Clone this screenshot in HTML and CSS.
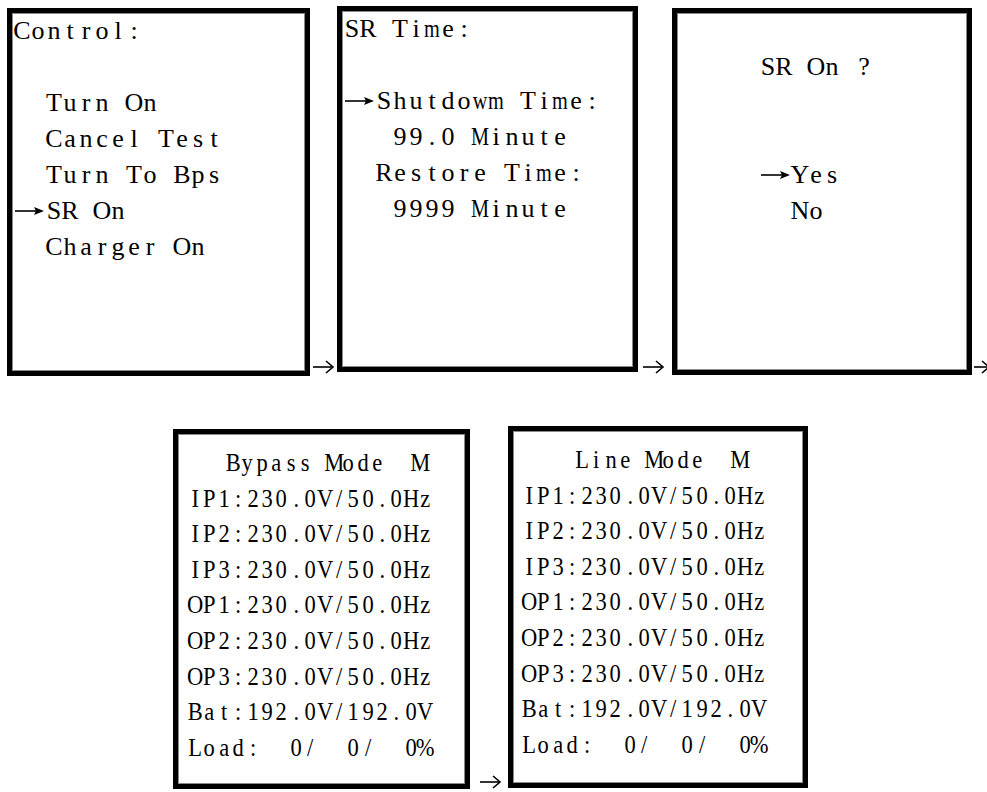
FILE: index.html
```html
<!DOCTYPE html>
<html lang="en">
<head>
    <meta charset="UTF-8">
    <meta name="viewport" content="width=device-width, initial-scale=1.0">
    <title>UPS LCD menu</title>
    <link rel="stylesheet" href="styles.css">
</head>
<body>
    <div class="row row-top">
        <div class="screen s1">
            <div class="ln">Control:</div>
            <div class="ln"> </div>
            <div class="ln">  Turn On</div>
            <div class="ln">  Cancel Test</div>
            <div class="ln">  Turn To Bps</div>
            <div class="ln"><span class="ptr"><svg width="30" height="12" viewBox="0 0 30 12"><line x1="1" y1="6" x2="23" y2="6" stroke="#000" stroke-width="1.6"/><polygon points="20,2 30,6 20,10 22,6" fill="#000"/></svg></span>SR On</div>
            <div class="ln">  Charger On</div>
        </div>
        <div class="step"><svg width="22" height="14" viewBox="0 0 22 14"><line x1="0" y1="7" x2="20" y2="7" stroke="#000" stroke-width="1.6"/><polyline points="13,1 20,7 13,13" fill="none" stroke="#000" stroke-width="1.6"/></svg></div>
        <div class="screen s2">
            <div class="ln">SR Time:</div>
            <div class="ln"> </div>
            <div class="ln"><span class="ptr"><svg width="30" height="12" viewBox="0 0 30 12"><line x1="1" y1="6" x2="23" y2="6" stroke="#000" stroke-width="1.6"/><polygon points="20,2 30,6 20,10 22,6" fill="#000"/></svg></span>Shutdowm Time:</div>
            <div class="ln">   99.0 Minute</div>
            <div class="ln">  Restore Time:</div>
            <div class="ln">   9999 Minute</div>
        </div>
        <div class="step step-wide"><svg width="22" height="14" viewBox="0 0 22 14"><line x1="0" y1="7" x2="20" y2="7" stroke="#000" stroke-width="1.6"/><polyline points="13,1 20,7 13,13" fill="none" stroke="#000" stroke-width="1.6"/></svg></div>
        <div class="screen s3">
            <div class="ln"> </div>
            <div class="ln">     SR On ?</div>
            <div class="ln"> </div>
            <div class="ln"> </div>
            <div class="ln">     <span class="ptr"><svg width="30" height="12" viewBox="0 0 30 12"><line x1="1" y1="6" x2="23" y2="6" stroke="#000" stroke-width="1.6"/><polygon points="20,2 30,6 20,10 22,6" fill="#000"/></svg></span>Yes</div>
            <div class="ln">       No</div>
        </div>
        <div class="step step-last"><svg width="16" height="14" viewBox="0 0 16 14"><line x1="0" y1="7" x2="15" y2="7" stroke="#000" stroke-width="1.6"/><polyline points="8,1 15,7 8,13" fill="none" stroke="#000" stroke-width="1.6"/></svg></div>
    </div>

    <div class="row row-bottom">
        <div class="screen status s4">
            <div class="ln t-bypass">Bypass Mode  M</div>
            <div class="ln">IP1:230.0V/50.0Hz</div>
            <div class="ln">IP2:230.0V/50.0Hz</div>
            <div class="ln">IP3:230.0V/50.0Hz</div>
            <div class="ln">OP1:230.0V/50.0Hz</div>
            <div class="ln">OP2:230.0V/50.0Hz</div>
            <div class="ln">OP3:230.0V/50.0Hz</div>
            <div class="ln">Bat:192.0V/192.0V</div>
            <div class="ln">Load:  0/  0/  0%</div>
        </div>
        <div class="step step-mid"><svg width="22" height="14" viewBox="0 0 22 14"><line x1="0" y1="7" x2="20" y2="7" stroke="#000" stroke-width="1.6"/><polyline points="13,1 20,7 13,13" fill="none" stroke="#000" stroke-width="1.6"/></svg></div>
        <div class="screen status s5">
            <div class="ln t-line">Line Mode  M</div>
            <div class="ln">IP1:230.0V/50.0Hz</div>
            <div class="ln">IP2:230.0V/50.0Hz</div>
            <div class="ln">IP3:230.0V/50.0Hz</div>
            <div class="ln">OP1:230.0V/50.0Hz</div>
            <div class="ln">OP2:230.0V/50.0Hz</div>
            <div class="ln">OP3:230.0V/50.0Hz</div>
            <div class="ln">Bat:192.0V/192.0V</div>
            <div class="ln">Load:  0/  0/  0%</div>
        </div>
    </div>
    <script>
        // LCD uses a fixed character grid: put every character in its own cell
        document.querySelectorAll('.ln').forEach(function(line) {
            Array.from(line.childNodes).forEach(function(node) {
                if (node.nodeType !== 3) return;
                const frag = document.createDocumentFragment();
                for (const ch of node.textContent) {
                    const cell = document.createElement('span');
                    cell.className = 'mwMW'.indexOf(ch) >= 0 ? 'c wide' : 'c';
                    cell.textContent = ch;
                    frag.appendChild(cell);
                }
                line.replaceChild(frag, node);
            });
        });
    </script>
</body>
</html>
```

FILE: styles.css
```css
body {
    margin: 0;
    padding: 0;
    background-color: #fff;
    color: #000;
    font-family: "Liberation Serif", "DejaVu Serif", serif;
    overflow: hidden;
}
.row {
    display: flex;
    align-items: flex-start;
}
.row-top {
    height: 376px;
    padding-left: 7px;
}
.row-bottom {
    padding-left: 173px;
}
.screen {
    box-sizing: border-box;
    border: 5px solid #000;
    box-shadow: inset 0 0 0 1px #8a8a8a;
    background: #fff;
    padding: 0 0 0 2px;
    font-size: 26px;
    line-height: 36px;
    flex: none;
}
.ln {
    white-space: pre;
    height: 36px;
}
.c {
    display: inline-flex;
    justify-content: center;
    width: 16px;
}
.c.wide {
    transform: scaleX(0.78);
}
.ptr {
    display: inline-block;
    width: 32px;
    vertical-align: middle;
    line-height: 0;
}
.ptr svg {
    display: block;
    margin-top: -4px;
}
.s1 {
    width: 303px;
    height: 368px;
    margin-top: 8px;
}
.s2 {
    width: 301px;
    height: 366px;
    margin-top: 6px;
}
.s3 {
    width: 300px;
    height: 367px;
    margin-top: 8px;
    padding-left: 3px;
}
.step {
    flex: none;
    align-self: stretch;
    display: flex;
    align-items: flex-end;
    width: 27px;
    padding-bottom: 2px;
    box-sizing: border-box;
    padding-left: 3px;
}
.step svg {
    flex: none;
}
.step-wide {
    width: 34px;
    padding-left: 5px;
}
.step-last {
    flex: 1;
    overflow: hidden;
    padding-left: 2px;
}
.step-mid {
    width: 38px;
    padding-left: 10px;
    padding-bottom: 0;
}
.status {
    font-size: 25px;
    line-height: 35.6px;
    padding: 11px 0 0 10px;
}
.status .ln {
    height: 35.6px;
}
.status .c {
    width: 14.4px;
    transform: scaleX(0.9);
}
.s4 {
    width: 297px;
    height: 360px;
    margin-top: 53px;
}
.s5 {
    width: 300px;
    height: 362px;
    margin-top: 50px;
    padding-left: 9px;
}
.t-bypass {
    padding-left: 38px;
}
.t-line {
    padding-left: 53px;
}
```
